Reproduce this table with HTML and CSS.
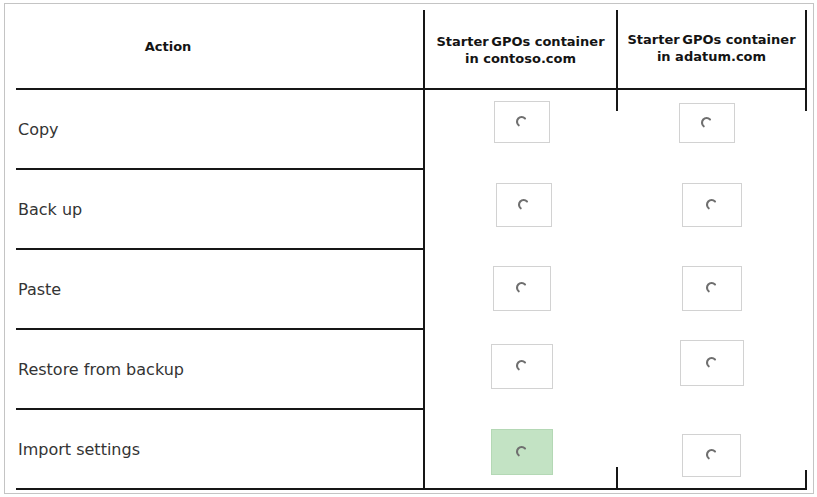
FILE: index.html
```html
<!DOCTYPE html>
<html>
<head>
<meta charset="utf-8">
<link rel="stylesheet" href="styles.css">
</head>
<body>
<div class="frame">
  <div class="table">
    <div class="cell head action">Action</div>
    <div class="cell head col2">Starter&#8201;GPOs container<br>in contoso.com</div>
    <div class="cell head col3">Starter&#8201;GPOs container<br>in adatum.com</div>

    <div class="row r1">
      <div class="cell label">Copy</div>
      <div class="cell opt c2 stub-top"><span class="box"><svg class="spin" viewBox="0 0 12 12"><path d="M8.57 2.94 A4 4 0 1 0 3.17 8.83"/></svg></span></div>
      <div class="cell opt c3 stub-top"><span class="box"><svg class="spin" viewBox="0 0 12 12"><path d="M8.57 2.94 A4 4 0 1 0 3.17 8.83"/></svg></span></div>
    </div>

    <div class="row r2">
      <div class="cell label">Back up</div>
      <div class="cell opt c2"><span class="box"><svg class="spin" viewBox="0 0 12 12"><path d="M8.57 2.94 A4 4 0 1 0 3.17 8.83"/></svg></span></div>
      <div class="cell opt c3"><span class="box"><svg class="spin" viewBox="0 0 12 12"><path d="M8.57 2.94 A4 4 0 1 0 3.17 8.83"/></svg></span></div>
    </div>

    <div class="row r3">
      <div class="cell label">Paste</div>
      <div class="cell opt c2"><span class="box"><svg class="spin" viewBox="0 0 12 12"><path d="M8.57 2.94 A4 4 0 1 0 3.17 8.83"/></svg></span></div>
      <div class="cell opt c3"><span class="box"><svg class="spin" viewBox="0 0 12 12"><path d="M8.57 2.94 A4 4 0 1 0 3.17 8.83"/></svg></span></div>
    </div>

    <div class="row r4">
      <div class="cell label">Restore from backup</div>
      <div class="cell opt c2"><span class="box"><svg class="spin" viewBox="0 0 12 12"><path d="M8.57 2.94 A4 4 0 1 0 3.17 8.83"/></svg></span></div>
      <div class="cell opt c3"><span class="box"><svg class="spin" viewBox="0 0 12 12"><path d="M8.57 2.94 A4 4 0 1 0 3.17 8.83"/></svg></span></div>
    </div>

    <div class="row r5">
      <div class="cell label">Import settings</div>
      <div class="cell opt c2 last stub-bottom"><span class="box selected"><svg class="spin" viewBox="0 0 12 12"><path d="M8.57 2.94 A4 4 0 1 0 3.17 8.83"/></svg></span></div>
      <div class="cell opt c3 last stub-bottom short"><span class="box"><svg class="spin" viewBox="0 0 12 12"><path d="M8.57 2.94 A4 4 0 1 0 3.17 8.83"/></svg></span></div>
    </div>
  </div>
</div>
</body>
</html>
```

FILE: styles.css
```css
html, body {
  margin: 0;
  padding: 0;
  background: #ffffff;
}

body {
  font-family: "DejaVu Sans", Verdana, sans-serif;
  color: #333333;
}

.frame {
  box-sizing: border-box;
  width: 810px;
  height: 491px;
  margin: 3px 0 0 4px;
  padding: 6px 0 0 11px;
  border: 1px solid #c4c4c4;
}

.table {
  display: grid;
  grid-template-columns: 409px 193px 189px;
  grid-auto-rows: 80px;
}

.row {
  display: contents;
}

.cell {
  box-sizing: border-box;
  display: flex;
  align-items: center;
  position: relative;
}

.head {
  border-bottom: 2px solid #161616;
  font-weight: bold;
  font-size: 13px;
  line-height: 17px;
  color: #141414;
  justify-content: center;
  text-align: center;
}

.head.action {
  border-right: 2px solid #161616;
  padding-right: 103px;
  padding-bottom: 6px;
}

.head.col2 {
  border-right: 2px solid #161616;
  padding-top: 2px;
}

.head.col3 {
  border-right: 2px solid #161616;
  padding-bottom: 4px;
  padding-top: 2px;
}

.label {
  border-right: 2px solid #161616;
  border-bottom: 2px solid #161616;
  padding-left: 2px;
  font-size: 16px;
  color: #343434;
}

.opt {
  justify-content: center;
}

.opt.c3 {
  padding-right: 2px;
}

.opt.last {
  border-bottom: 2px solid #161616;
}

.stub-top::after,
.stub-bottom::after {
  content: "";
  position: absolute;
  right: 0;
  width: 2px;
  background: #161616;
}

.stub-top::after {
  top: 0;
  height: 21px;
}

.stub-bottom::after {
  bottom: 0;
  height: 21px;
}

.stub-bottom.short::after {
  height: 18px;
}

.box {
  box-sizing: border-box;
  width: 58px;
  height: 44px;
  border: 1px solid #d2d2d2;
  background: #ffffff;
  display: flex;
  align-items: center;
  justify-content: center;
}

.box.selected {
  background: #c3e3c4;
  border-color: #b4d8b5;
}

.spin {
  width: 14px;
  height: 14px;
}

.spin path {
  fill: none;
  stroke: #6f6f6f;
  stroke-width: 1.8;
  stroke-linecap: round;
}

.r1 .box {
  width: 56px;
  height: 42px;
  margin-bottom: 16px;
}

.r1 .c3 .box {
  margin-right: 10px;
  height: 40px;
  margin-bottom: 14px;
}

.r2 .box {
  margin-bottom: 10px;
}

.r2 .c2 .box {
  width: 56px;
  margin-left: 4px;
}

.r2 .c3 .box {
  width: 60px;
}

.r3 .box {
  height: 45px;
  margin-bottom: 4px;
}

.r3 .c3 .box {
  width: 60px;
}

.r4 .box {
  width: 62px;
  height: 45px;
  margin-bottom: 8px;
}

.r4 .c3 .box {
  width: 64px;
  height: 46px;
  margin-bottom: 14px;
}

.r5 .box {
  height: 46px;
  margin-top: 6px;
}

.r5 .c2 .box {
  width: 62px;
}

.r5 .c3 .box {
  width: 59px;
  height: 43px;
  margin-top: 12px;
}
```
